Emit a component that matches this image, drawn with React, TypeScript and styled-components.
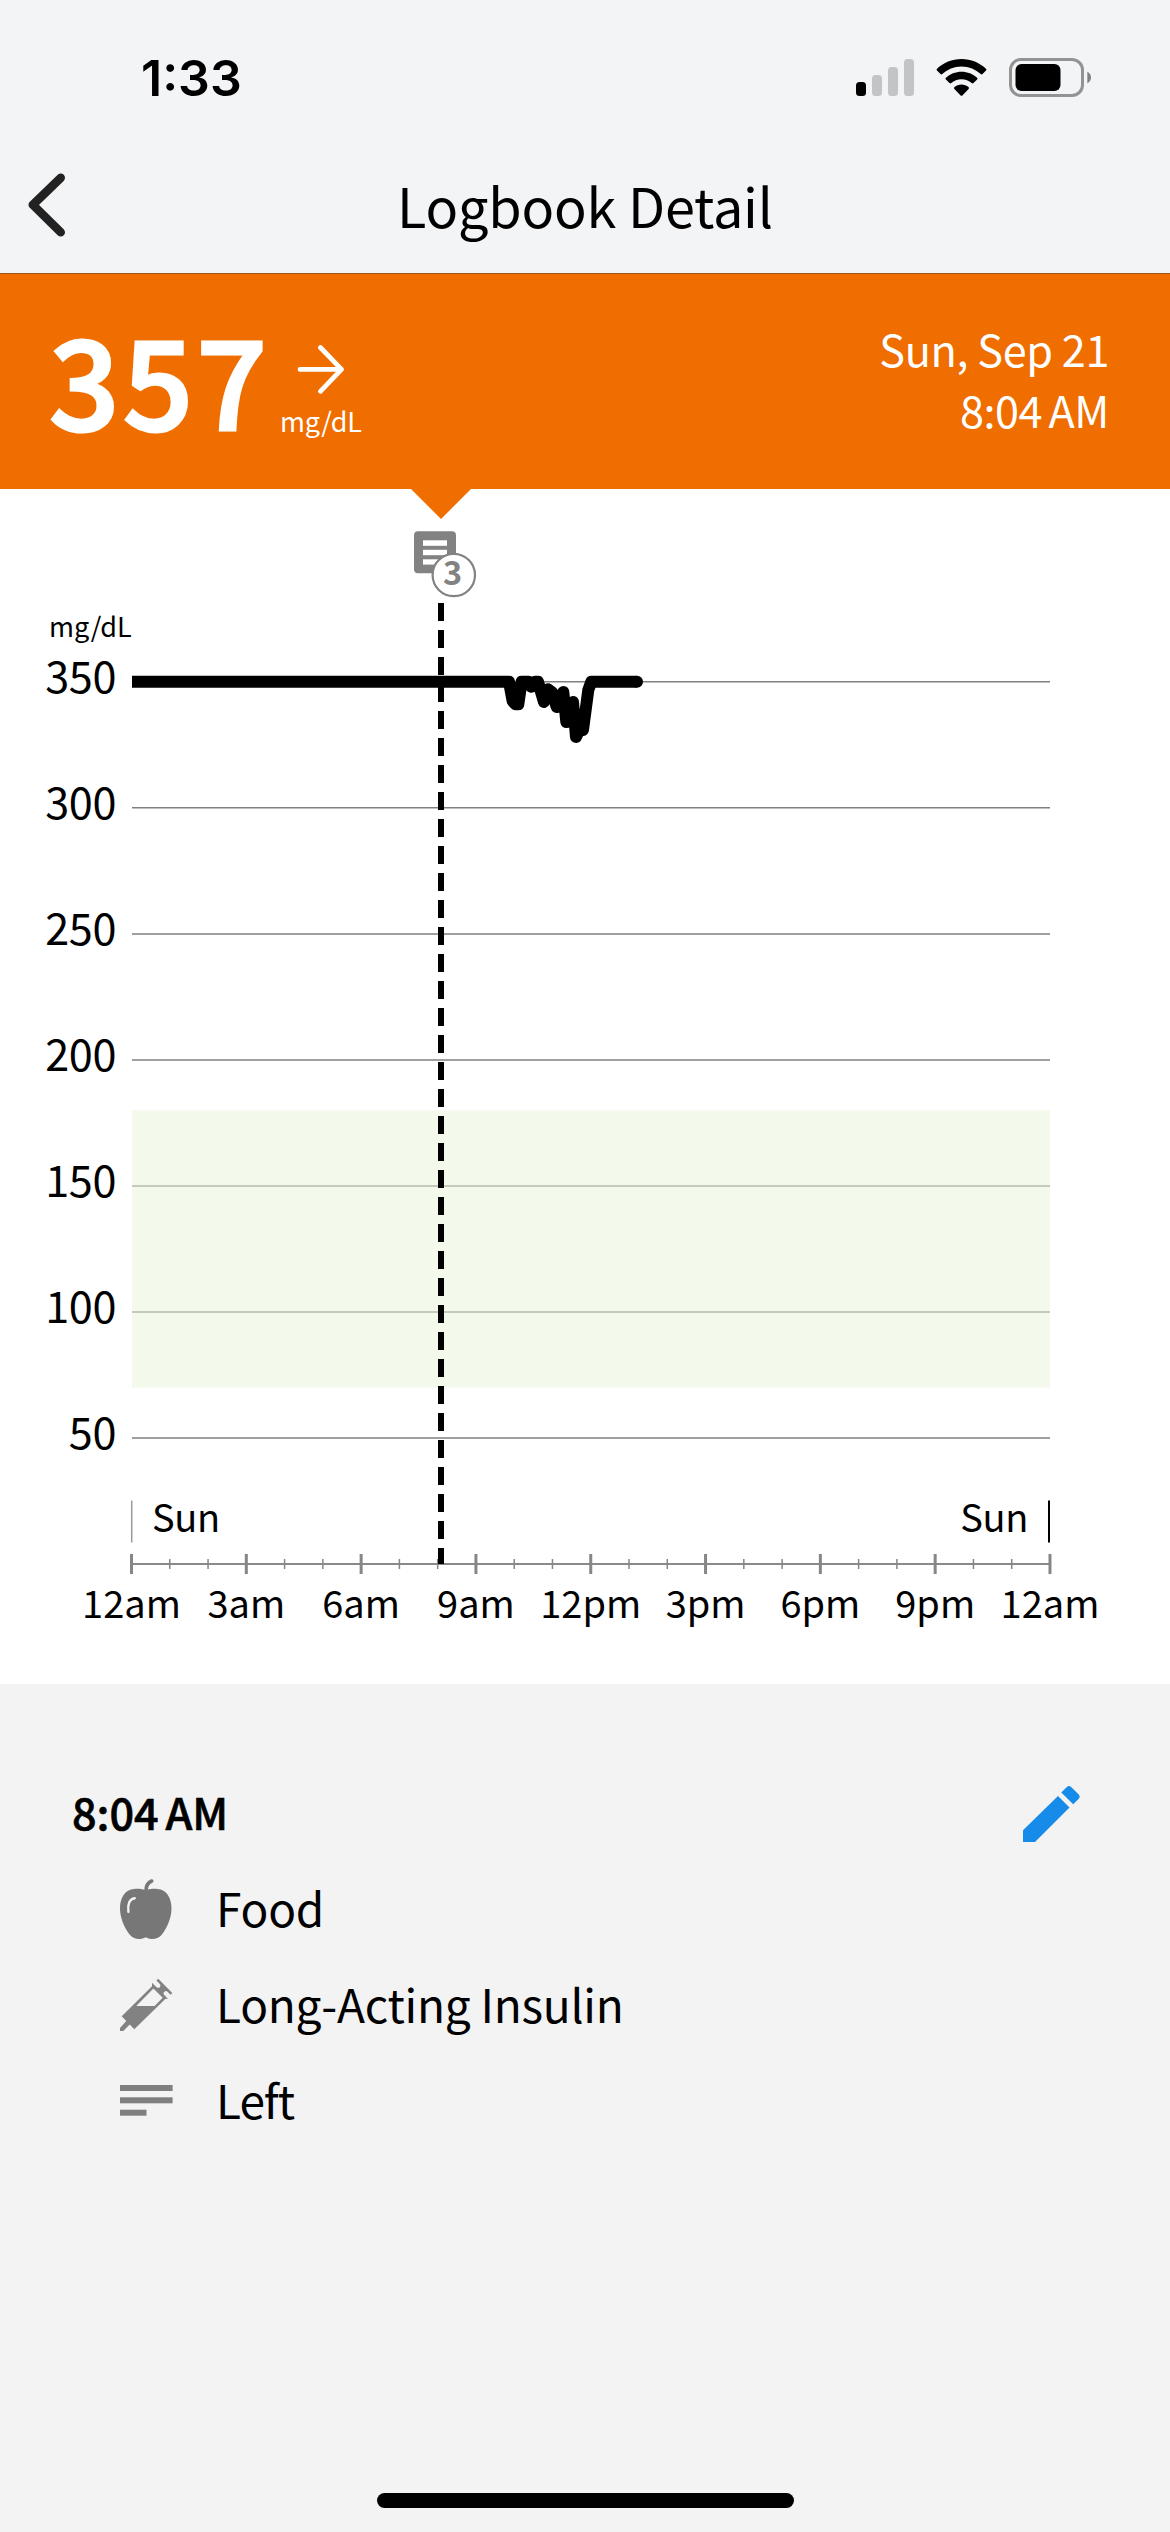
import React from "react";
import styled, { createGlobalStyle } from "styled-components";

const SANS = `"Noto Sans CJK SC", "Noto Sans", sans-serif`;
const ORANGE = "#f06d00";
const GREY = "#828282";
const PANEL = "#f3f3f3";

const GlobalStyle = createGlobalStyle`
  * { box-sizing: border-box; }
  body { margin: 0; background: ${PANEL}; }
`;

const Screen = styled.div`
  display: flex;
  flex-direction: column;
  width: 1170px;
  height: 2532px;
  background: ${PANEL};
  color: #000;
  font-family: ${SANS};
  overflow: hidden;
`;

const Top = styled.header`
  display: flex;
  flex-direction: column;
  height: 274px;
  background: #f3f4f6;
  border-bottom: 1px solid #9c5219;
`;

const StatusBar = styled.div`
  display: flex;
  align-items: center;
  justify-content: space-between;
  height: 136px;
  padding: 20px 78px 0 141px;
`;

const Clock = styled.span`
  font-family: Inter, sans-serif;
  font-size: 50px;
  font-weight: 600;
  line-height: 60px;
`;

const NavBar = styled.nav`
  display: grid;
  grid-template-columns: 120px 1fr 120px;
  align-items: center;
  height: 137px;
`;

const BackButton = styled.button`
  display: flex;
  align-items: center;
  height: 100px;
  padding: 0 0 0 24px;
  border: 0;
  background: none;
`;

const Title = styled.h1`
  margin: 0;
  font-size: 54px;
  font-weight: 400;
  line-height: 80px;
  letter-spacing: -0.2px;
  text-align: center;
  white-space: nowrap;
`;

const Banner = styled.section`
  position: relative;
  display: flex;
  justify-content: space-between;
  height: 215px;
  padding: 43px 61px 0 49px;
  background: ${ORANGE};
  color: #fff;
`;

const Pointer = styled.div`
  position: absolute;
  left: 411px;
  top: 214px;
  width: 60px;
  height: 31px;
  background: ${ORANGE};
  clip-path: polygon(0 0, 100% 0, 100% 1px, 50% 100%, 0 1px);
`;

const Reading = styled.div`
  display: flex;
  align-items: flex-start;
`;

const Value = styled.span`
  width: 231px;
  font-size: 123.5px;
  font-weight: 500;
  line-height: 119px;
  letter-spacing: 3.4px;
  -webkit-text-stroke: 3px #fff;
`;

const Trend = styled.div`
  display: flex;
  flex-direction: column;
  svg { display: block; }
`;

const Unit = styled.span`
  padding-top: 1px;
  font-size: 27px;
  line-height: 42px;
  letter-spacing: -0.2px;
`;

const Stamp = styled.div`
  display: flex;
  flex-direction: column;
  align-items: flex-end;
  padding-top: 1px;
  font-size: 43.2px;
  line-height: 61px;
  letter-spacing: -0.4px;
  white-space: nowrap;
`;

const Time = styled.span<{ $strong?: boolean }>`
  word-spacing: -3px;
  -webkit-text-stroke: ${(p) => (p.$strong ? "0.6px #000" : "0")};
`;

const ChartCard = styled.section`
  height: 1195px;
  background: #fff;
  svg { display: block; }
`;

const Details = styled.section`
  display: flex;
  flex-direction: column;
  flex: 1;
  padding: 79px 88px 0 72px;
`;

const DetailsHead = styled.div`
  display: flex;
  align-items: center;
  justify-content: space-between;
  height: 96px;
  font-size: 43.2px;
  font-weight: 500;
  line-height: 96px;
`;

const EntryList = styled.ul`
  margin: 0;
  padding: 0 0 0 48px;
  list-style: none;
`;

const Entry = styled.li<{ $tracking: number }>`
  display: flex;
  align-items: center;
  gap: 38px;
  height: 96px;
  font-size: 46px;
  line-height: 96px;
  letter-spacing: ${(p) => p.$tracking}px;
  white-space: nowrap;
`;

const HomeArea = styled.footer`
  display: flex;
  justify-content: center;
  height: 39px;
`;

const HomeIndicator = styled.div`
  width: 417px;
  height: 15px;
  border-radius: 8px;
  background: #000;
`;

const StatusIcons = () => (
  <svg width="237" height="40" viewBox="855 58 237 40">
    <rect x="856" y="82" width="10" height="14" rx="3.5" />
    <g fill="#c3c4c6">
      <rect x="872" y="75" width="10" height="21" rx="3.5" />
      <rect x="888" y="67" width="10" height="29" rx="3.5" />
      <rect x="904" y="59" width="10" height="37" rx="3.5" />
    </g>
    <path d="M961.5 59c9.5 0 18 3.7 24.5 9.7a1.300 1.300 0 0 1 0 1.900l-3.500 3.500a1.300 1.300 0 0 1-1.800 0c-5-4.800-11.700-7.700-19.200-7.700s-14.200 2.900-19.200 7.700a1.300 1.300 0 0 1-1.800 0l-3.500-3.500a1.300 1.300 0 0 1 0-1.900c6.500-6 15-9.700 24.500-9.700z" />
    <path d="M961.5 71.700c6 0 11.500 2.300 15.600 6a1.300 1.300 0 0 1 0 1.900l-3.600 3.500a1.300 1.300 0 0 1-1.800 0c-2.700-2.500-6.300-3.900-10.200-3.900s-7.500 1.400-10.200 3.900a1.300 1.300 0 0 1-1.800 0l-3.600-3.500a1.300 1.300 0 0 1 0-1.900c4.100-3.700 9.600-6 15.600-6z" />
    <path d="M961.5 84.600c2.700 0 5.100.9 7 2.500.6.500.6 1.300.1 1.800l-6.200 6.500a1.300 1.300 0 0 1-1.800 0l-6.200-6.500c-.5-.5-.5-1.300.1-1.800 1.900-1.600 4.300-2.500 7-2.500z" />
    <rect x="1010.500" y="59.500" width="72" height="36" rx="10.500" fill="none" stroke="#929395" strokeWidth="3" />
    <rect x="1015.500" y="64" width="45" height="27" rx="6" />
    <path d="M1087.300 71.800c2.300 1 3.700 3.200 3.700 5.700s-1.400 4.700-3.700 5.700z" fill="#808183" />
  </svg>
);

const BackIcon = () => (
  <svg width="48" height="72" viewBox="24 168.500 48 72">
    <path d="M60.700 177.300 32.800 204.300 60.700 231.700" fill="none" stroke="#222" strokeWidth="8.600" strokeLinecap="round" strokeLinejoin="round" />
  </svg>
);

const TrendArrow = () => (
  <svg width="80" height="82" viewBox="280 317 80 82">
    <path d="M300 369.400H341.500M320.400 347.500 341.500 369.400 320.400 391.300" fill="none" stroke="#fff" strokeWidth="4.800" strokeLinecap="round" strokeLinejoin="round" />
  </svg>
);

const AppleIcon = () => (
  <svg width="58" height="72" viewBox="0 0 58 72">
    <path d="M25.700 19.500C30 17.800 34 17.700 37.500 18 46.500 18.800 51.500 26.500 51.500 37.500 51.500 48 46 58.500 41.500 64 37.500 68.800 30.500 69 25.700 66.300 21 69 14 68.800 10 64 5.500 58.500 0 48 0 37.500 0 26.500 5 18.800 14 18c3.500-.3 7.500-.2 11.700 1.500z" fill="#777" />
    <path d="M26 20C26 15 28 11.500 31.700 10" fill="none" stroke="#777" strokeWidth="3.600" strokeLinecap="round" />
    <path d="M14.700 27.200C9.500 27.800 7.500 33 8.400 40.800" fill="none" stroke={PANEL} strokeWidth="2.400" strokeLinecap="round" />
  </svg>
);

const SyringeIcon = () => (
  <svg width="58" height="72" viewBox="0 0 58 72">
    <g fill={GREY}>
      <path d="M0 61 6.300 54 1.700 49.300 32 19.300V15.700L48 31.700H45.500L14.300 62.300 9.700 57.500 3.300 64H0z" />
      <path d="M35.500 20.200Q38.500 21.600 40 20 41.200 18.200 39.600 15.600L48.600 24.600Q46 23.200 44.300 24.700 42.600 26.500 44.300 29z" />
    </g>
    <path d="M33.400 21.600 42.700 30.700 34.600 38.900H16.200z" fill={PANEL} />
    <path d="M37.300 12.700 51.400 26.800" stroke={GREY} strokeWidth="2.600" />
  </svg>
);

const NoteIcon = () => (
  <svg width="58" height="72" viewBox="0 0 58 72">
    <g fill="#7f7f7f">
      <rect x="0" y="22" width="52.600" height="6" />
      <rect x="0" y="34.300" width="52.600" height="6" />
      <rect x="0" y="46.700" width="26.500" height="6" />
    </g>
  </svg>
);

const PencilIcon = () => (
  <svg width="59" height="64" viewBox="1023 1779 59 64" fill="#178bea">
    <path d="M1023 1830.200 1058 1796 1069.500 1807.500 1035 1842H1023z" />
    <path d="M1061.300 1792.500 1066.600 1787.200Q1069 1784.800 1071.400 1787.200L1078.500 1794.300Q1080.900 1796.700 1078.500 1799.100L1073.200 1804.300z" />
  </svg>
);

const yFor = (v: number) => 1564 - v * 2.5205;
const xFor = (h: number) => 131.5 + h * 38.27;

const levels = [350, 300, 250, 200, 150, 100, 50];
const hourLabels = ["12am", "3am", "6am", "9am", "12pm", "3pm", "6pm", "9pm", "12am"];
const hours = Array.from({ length: 25 }, (_, i) => i);

const trace: [number, number][] = [
  [132, 681.7], [509, 681.7], [512.6, 701], [515.5, 704.3], [518.3, 704.3],
  [521.6, 681.7], [528.5, 681.7], [531.3, 686.8], [534.7, 681.7], [538, 681.7],
  [544, 702], [548, 689.3], [552, 692.3], [556.7, 707], [563.3, 692], [566.3, 722],
  [573, 702], [576, 737], [579.5, 729.5], [583, 730], [588.3, 690], [591.3, 681.7], [637, 681.7],
];

const GlucoseChart = () => (
  <svg width="1170" height="1195" viewBox="0 489 1170 1195" fontFamily={SANS}>
    <g stroke="#808080" strokeWidth="1.500">
      {levels.map((v) => (
        <line key={v} x1="132" x2="1050" y1={yFor(v)} y2={yFor(v)} />
      ))}
    </g>
    <rect x="132" y={yFor(180)} width="918" height={yFor(70) - yFor(180)} fill="#e8f4d8" fillOpacity=".5" />
    <text x="49" y="637" fontSize="27">mg/dL</text>
    <g fontSize="43.200" textAnchor="end" letterSpacing="-.4">
      {levels.map((v) => (
        <text key={v} x="116" y={yFor(v) + 11}>{v}</text>
      ))}
    </g>

    <line x1="132" x2="1050" y1="1564" y2="1564" stroke="#8a8a8a" strokeWidth="2" />
    {hours.map((h) => {
      const major = h % 3 === 0;
      const reach = major ? 10 : 5;
      return (
        <line key={h} x1={xFor(h)} x2={xFor(h)} y1={1564 - reach} y2={1564 + reach} stroke="#868686" strokeWidth={major ? 3 : 1.5} />
      );
    })}
    <g fontSize="38" textAnchor="middle">
      {hourLabels.map((label, i) => (
        <text key={i} x={xFor(i * 3)} y="1618">{label}</text>
      ))}
    </g>
    <line x1="131.700" x2="131.700" y1="1500.500" y2="1542.500" stroke="#999" strokeWidth="1.500" />
    <g fontSize="38" letterSpacing="-.4">
      <text x="152" y="1532">Sun</text>
      <text x="1028" y="1532" textAnchor="end">Sun</text>
    </g>
    <line x1="1049" x2="1049" y1="1500.500" y2="1542.500" stroke="#000" strokeWidth="2" />

    <line x1="441" x2="441" y1="603" y2="1564" stroke="#000" strokeWidth="6" strokeDasharray="18 9" />
    <polyline points={trace.map((p) => p.join(",")).join(" ")} fill="none" stroke="#000" strokeWidth="12" strokeLinejoin="round" />
    <circle cx="637" cy="681.700" r="6" />

    <rect x="414" y="531.300" width="42" height="42" rx="4" fill={GREY} />
    <g fill="#fff">
      <rect x="423" y="540.300" width="24" height="5.500" />
      <rect x="423" y="549.800" width="24" height="5.400" />
      <rect x="423" y="559.300" width="24" height="5.300" />
    </g>
    <circle cx="453.800" cy="575" r="21.200" fill="#fff" stroke={GREY} strokeWidth="2.200" />
    <text x="452.600" y="584.600" fontSize="32.500" fontWeight="700" textAnchor="middle" fill={GREY}>3</text>
  </svg>
);

const entries = [
  { label: "Food", Icon: AppleIcon, tracking: -0.2 },
  { label: "Long-Acting Insulin", Icon: SyringeIcon, tracking: -0.25 },
  { label: "Left", Icon: NoteIcon, tracking: -1 },
];

export default function App() {
  return (
    <>
      <GlobalStyle />
      <Screen>
        <Top>
          <StatusBar>
            <Clock>1:33</Clock>
            <StatusIcons />
          </StatusBar>
          <NavBar>
            <BackButton aria-label="Back">
              <BackIcon />
            </BackButton>
            <Title>Logbook Detail</Title>
          </NavBar>
        </Top>
        <Banner>
          <Reading>
            <Value>357</Value>
            <Trend>
              <TrendArrow />
              <Unit>mg/dL</Unit>
            </Trend>
          </Reading>
          <Stamp>
            <span>Sun, Sep 21</span>
            <Time>8:04 AM</Time>
          </Stamp>
          <Pointer />
        </Banner>
        <ChartCard>
          <GlucoseChart />
        </ChartCard>
        <Details>
          <DetailsHead>
            <Time $strong>8:04 AM</Time>
            <PencilIcon />
          </DetailsHead>
          <EntryList>
            {entries.map(({ label, Icon, tracking }) => (
              <Entry key={label} $tracking={tracking}>
                <Icon />
                {label}
              </Entry>
            ))}
          </EntryList>
        </Details>
        <HomeArea>
          <HomeIndicator />
        </HomeArea>
      </Screen>
    </>
  );
}
